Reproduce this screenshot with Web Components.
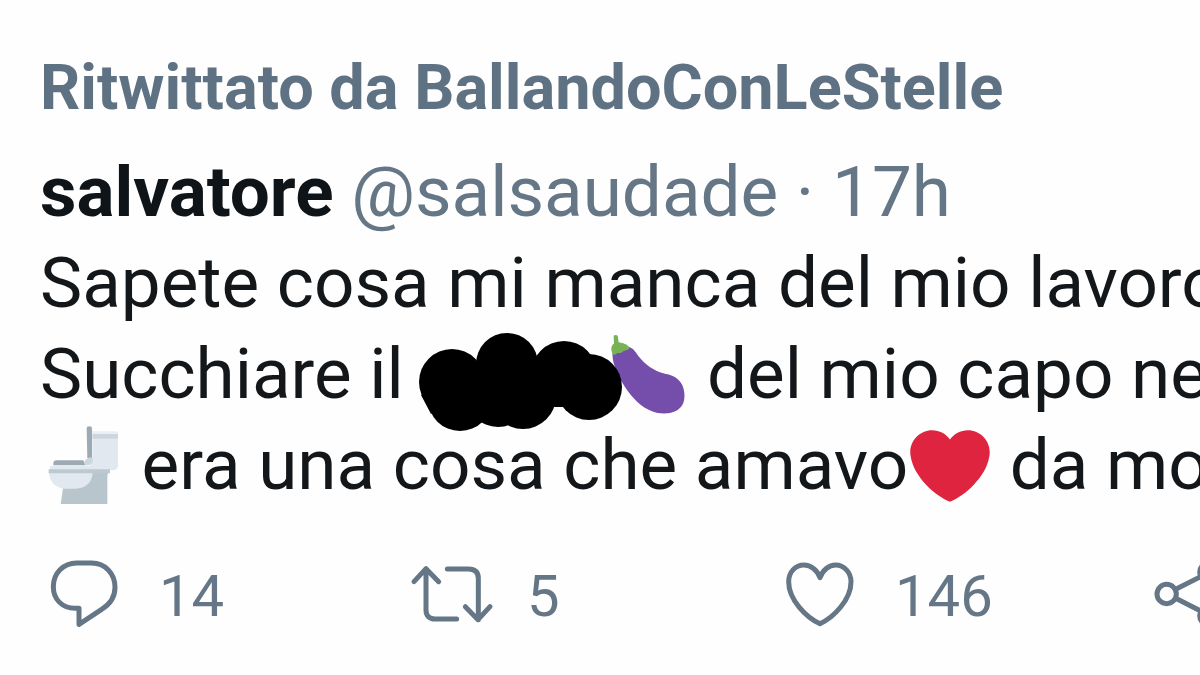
<!DOCTYPE html>
<html lang="it">
<head>
<meta charset="utf-8">
<meta name="viewport" content="width=device-width, initial-scale=1">
<title>Tweet</title>
<style>
body { margin: 0; background: #fefefe; overflow-x: hidden; font-family: Roboto, "Liberation Sans", sans-serif; }
</style>
</head>
<body>
<tweet-card>
  <retweet-label slot="context">Ritwittato da BallandoConLeStelle</retweet-label>
  <tweet-author slot="author" name="salvatore" handle="@salsaudade" time="17h"></tweet-author>
  <tweet-line>Sapete cosa mi manca del mio lavoro</tweet-line>
  <tweet-line>Succhiare il <ink-blot></ink-blot><emoji-icon name="eggplant"></emoji-icon> del mio capo ne</tweet-line>
  <tweet-line><emoji-icon name="toilet"></emoji-icon> era una cosa che amavo<emoji-icon name="heart"></emoji-icon> da mo</tweet-line>
  <tweet-action slot="actions" icon="reply" label="Rispondi">14</tweet-action>
  <tweet-action slot="actions" icon="retweet" label="Ritwitta">5</tweet-action>
  <tweet-action slot="actions" icon="like" label="Mi piace">146</tweet-action>
  <tweet-action slot="actions" icon="share" label="Condividi"></tweet-action>
</tweet-card>
<script>
function define(name, render) {
  customElements.define(name, class extends HTMLElement {
    connectedCallback() {
      if (!this.shadowRoot) this.attachShadow({ mode: 'open' }).innerHTML = render(this);
    }
  });
}

define('tweet-card', () => `
<style>
  :host { display: block; overflow: hidden; padding: 52px 0 40px; color: #14171a; }
  header { padding-left: 40px; }
  .text { padding-left: 40px; font-size: 71px; line-height: 91px; }
  footer { display: grid; grid-template-columns: 1fr 1fr 1fr 48px; padding-left: 48px; margin-top: 50px; }
</style>
<article>
  <header><slot name="context"></slot><slot name="author"></slot></header>
  <div class="text"><slot></slot></div>
  <footer><slot name="actions"></slot></footer>
</article>`);

define('retweet-label', () => `
<style>
  :host { display: block; margin-bottom: 22px; color: #5f7283; font-size: 63px; line-height: 72px; font-weight: 700; white-space: nowrap; }
</style><slot></slot>`);

define('tweet-author', el => `
<style>
  :host { display: block; font-size: 71px; line-height: 91px; color: #657786; white-space: nowrap; }
  a { color: inherit; text-decoration: none; }
  .name { color: #0f1418; font-weight: 700; }
</style><a class="name" href="#">${el.getAttribute('name')}</a> <a href="#">${el.getAttribute('handle')}</a> · <time>${el.getAttribute('time')}</time>`);

define('tweet-line', () => `
<style>:host { display: block; height: 91px; white-space: nowrap; }</style><slot></slot>`);

define('ink-blot', () => `
<style>
  :host { display: inline-block; position: relative; width: 184px; height: 80px; vertical-align: -17px; }
  svg { display: block; overflow: visible; }
</style>
<svg width="184" height="80" viewBox="2 0 184 80" aria-hidden="true">
  <circle cx="33" cy="47" r="33"/><circle cx="41" cy="64" r="32"/><circle cx="88" cy="29" r="31"/>
  <circle cx="79" cy="60" r="32"/><circle cx="104" cy="61" r="33"/><circle cx="145" cy="39" r="33"/>
  <circle cx="170" cy="52" r="33"/><path d="M33 36H150V72H33ZM2 60L12 79L40 60Z"/>
</svg>`);

const EMOJI = {
  eggplant: ['621 42 240 240', 'Melanzana', `
    <path fill="#744eaa" d="M638 92C633 130 665 190 700 230C735 270 775 282 810 276C845 268 856 245 853 215C850 180 825 162 795 158C760 150 735 130 715 105C705 90 698 80 685 78Z"/>
    <path fill="#77b255" d="M641 44Q647 40 653 44L656 64C668 66 683 70 689 80C685 90 672 86 668 92C660 100 652 92 648 100C640 104 637 98 636 94C632 84 634 72 642 68Z"/>`],
  toilet: ['36 30 240 240', 'WC', `
    <path fill="#b8c5cd" d="M100 210L92 264H232V185C232 172 236 165 244 158H150Z"/>
    <path fill="#e1e8ef" d="M187 64H264V148Q264 162 250 162H60V150H170Q187 150 187 135Z"/>
    <path fill="#e9eff5" d="M184 46H258Q265 46 265 54H184Z"/>
    <path fill="#ccd6dd" d="M187 54H264V68H187Z"/>
    <path fill="#e1e8ef" d="M57 168H188C188 198 168 218 135 218H104C75 216 57 195 57 168Z"/>
    <path fill="#bdc9d1" d="M56 160H240V172H56Z"/>
    <path fill="#9daab4" d="M170 38Q170 31 178 31Q186 31 186 38V126H172ZM70 148Q68 133 80 133H160L166 148Z"/>
    <path fill="#ccd6dd" d="M164 148V136Q172 124 188 124V138Q184 148 172 148Z"/>`],
  heart: ['0 0 36 36', 'Cuore', `
    <path fill="#df2440" d="M35.885 11.833c0-5.45-4.418-9.868-9.867-9.868-3.308 0-6.227 1.633-8.018 4.129-1.791-2.496-4.71-4.129-8.017-4.129-5.45 0-9.868 4.417-9.868 9.868 0 .772.098 1.52.266 2.241C1.751 22.587 11.216 31.568 18 34.034c6.783-2.466 16.249-11.447 17.617-19.959.17-.721.268-1.469.268-2.242z"/>`]
};

define('emoji-icon', el => {
  const [box, label, art] = EMOJI[el.getAttribute('name')];
  return `
<style>
  :host { display: inline-block; width: 80px; height: 80px; margin: 0 2px; vertical-align: -17px; }
  svg { display: block; }
</style><svg width="80" height="80" viewBox="${box}" role="img" aria-label="${label}">${art}</svg>`;
});

const ICONS = {
  reply: ['54 45 216 216', '<path d="M147 238V190H135C96 190 70 162 70 125C70 85 100 54 140 54H185C225 54 255 85 255 127C255 155 240 178 215 193Z"/>'],
  retweet: ['48 45 216 216', '<path d="M42 110L78 71L116 110M78 72V195C78 212 88 222 105 222H170M142 72H205C225 72 235 82 235 100V224M196 185L234 224L270 185"/>'],
  like: ['42 45 216 216', '<path d="M150 98C142 75 122 60 102 60C75 60 56 82 56 110C56 165 110 218 150 236C190 218 243 165 243 110C243 82 222 60 197 60C177 60 158 75 150 98Z"/>'],
  share: ['96 45 216 216', '<circle cx="140" cy="147" r="29"/><circle cx="268" cy="82" r="29"/><circle cx="268" cy="212" r="29"/><path d="M167 133L242 95M167 160L242 198"/>']
};

define('tweet-action', el => {
  const [box, art] = ICONS[el.getAttribute('icon')];
  return `
<style>
  :host { display: block; color: #657786; }
  button { display: flex; align-items: center; gap: 39px; padding: 0; border: 0; background: none; color: inherit; font: 400 58px/72px Roboto, "Liberation Sans", sans-serif; cursor: pointer; }
  svg { display: block; flex: none; overflow: visible; fill: none; stroke: currentColor; stroke-width: 15; stroke-linecap: round; stroke-linejoin: round; }
</style><button type="button" aria-label="${el.getAttribute('label')} ${el.textContent}"><svg width="72" height="72" viewBox="${box}" aria-hidden="true">${art}</svg><slot></slot></button>`;
});
</script>
</body>
</html>
